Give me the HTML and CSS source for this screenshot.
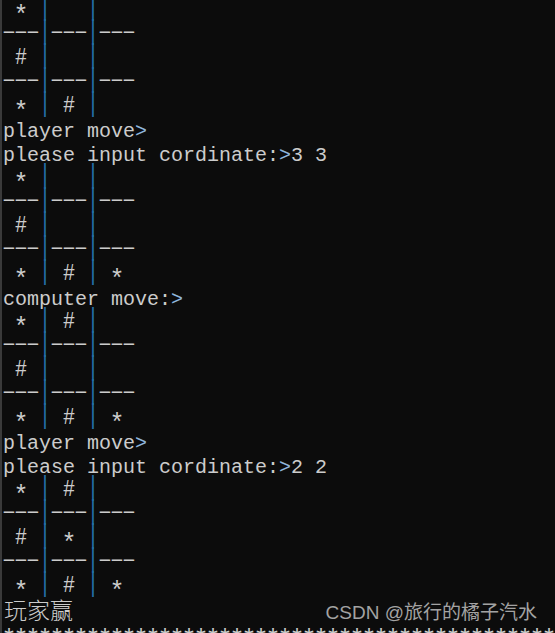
FILE: index.html
```html
<!DOCTYPE html>
<html lang="zh">
<head>
<meta charset="utf-8">
<title>console</title>
<link rel="stylesheet" href="styles.css">
</head>
<body>
<div class="window">
  <div class="console">
    <div class="ln"> <span class="s">*</span> <span class="p">|</span>   <span class="p">|</span></div>
    <div class="ln"><span class="d">-</span><span class="d">-</span><span class="d">-</span><span class="p">|</span><span class="d">-</span><span class="d">-</span><span class="d">-</span><span class="p">|</span><span class="d">-</span><span class="d">-</span><span class="d">-</span></div>
    <div class="ln"> <span class="h">#</span> <span class="p">|</span>   <span class="p">|</span></div>
    <div class="ln"><span class="d">-</span><span class="d">-</span><span class="d">-</span><span class="p">|</span><span class="d">-</span><span class="d">-</span><span class="d">-</span><span class="p">|</span><span class="d">-</span><span class="d">-</span><span class="d">-</span></div>
    <div class="ln"> <span class="s">*</span> <span class="p">|</span> <span class="h">#</span> <span class="p">|</span></div>
    <div class="ln">player move<span class="g">&gt;</span></div>
    <div class="ln">please input cordinate:<span class="g">&gt;</span>3 3</div>

    <div class="ln"> <span class="s">*</span> <span class="p">|</span>   <span class="p">|</span></div>
    <div class="ln"><span class="d">-</span><span class="d">-</span><span class="d">-</span><span class="p">|</span><span class="d">-</span><span class="d">-</span><span class="d">-</span><span class="p">|</span><span class="d">-</span><span class="d">-</span><span class="d">-</span></div>
    <div class="ln"> <span class="h">#</span> <span class="p">|</span>   <span class="p">|</span></div>
    <div class="ln"><span class="d">-</span><span class="d">-</span><span class="d">-</span><span class="p">|</span><span class="d">-</span><span class="d">-</span><span class="d">-</span><span class="p">|</span><span class="d">-</span><span class="d">-</span><span class="d">-</span></div>
    <div class="ln"> <span class="s">*</span> <span class="p">|</span> <span class="h">#</span> <span class="p">|</span> <span class="s">*</span></div>
    <div class="ln">computer move:<span class="g">&gt;</span></div>

    <div class="ln"> <span class="s">*</span> <span class="p">|</span> <span class="h">#</span> <span class="p">|</span></div>
    <div class="ln"><span class="d">-</span><span class="d">-</span><span class="d">-</span><span class="p">|</span><span class="d">-</span><span class="d">-</span><span class="d">-</span><span class="p">|</span><span class="d">-</span><span class="d">-</span><span class="d">-</span></div>
    <div class="ln"> <span class="h">#</span> <span class="p">|</span>   <span class="p">|</span></div>
    <div class="ln"><span class="d">-</span><span class="d">-</span><span class="d">-</span><span class="p">|</span><span class="d">-</span><span class="d">-</span><span class="d">-</span><span class="p">|</span><span class="d">-</span><span class="d">-</span><span class="d">-</span></div>
    <div class="ln"> <span class="s">*</span> <span class="p">|</span> <span class="h">#</span> <span class="p">|</span> <span class="s">*</span></div>
    <div class="ln">player move<span class="g">&gt;</span></div>
    <div class="ln">please input cordinate:<span class="g">&gt;</span>2 2</div>

    <div class="ln"> <span class="s">*</span> <span class="p">|</span> <span class="h">#</span> <span class="p">|</span></div>
    <div class="ln"><span class="d">-</span><span class="d">-</span><span class="d">-</span><span class="p">|</span><span class="d">-</span><span class="d">-</span><span class="d">-</span><span class="p">|</span><span class="d">-</span><span class="d">-</span><span class="d">-</span></div>
    <div class="ln"> <span class="h">#</span> <span class="p">|</span> <span class="s">*</span> <span class="p">|</span></div>
    <div class="ln"><span class="d">-</span><span class="d">-</span><span class="d">-</span><span class="p">|</span><span class="d">-</span><span class="d">-</span><span class="d">-</span><span class="p">|</span><span class="d">-</span><span class="d">-</span><span class="d">-</span></div>
    <div class="ln"> <span class="s">*</span> <span class="p">|</span> <span class="h">#</span> <span class="p">|</span> <span class="s">*</span></div>
    <div class="ln cjk">玩家赢</div>
    <div class="ln stars"><span class="s">*</span><span class="s">*</span><span class="s">*</span><span class="s">*</span><span class="s">*</span><span class="s">*</span><span class="s">*</span><span class="s">*</span><span class="s">*</span><span class="s">*</span><span class="s">*</span><span class="s">*</span><span class="s">*</span><span class="s">*</span><span class="s">*</span><span class="s">*</span><span class="s">*</span><span class="s">*</span><span class="s">*</span><span class="s">*</span><span class="s">*</span><span class="s">*</span><span class="s">*</span><span class="s">*</span><span class="s">*</span><span class="s">*</span><span class="s">*</span><span class="s">*</span><span class="s">*</span><span class="s">*</span><span class="s">*</span><span class="s">*</span><span class="s">*</span><span class="s">*</span><span class="s">*</span><span class="s">*</span><span class="s">*</span><span class="s">*</span><span class="s">*</span><span class="s">*</span><span class="s">*</span><span class="s">*</span><span class="s">*</span><span class="s">*</span><span class="s">*</span><span class="s">*</span></div>
  </div>
  <div class="watermark">CSDN @旅行的橘子汽水</div>
</div>
</body>
</html>
```

FILE: styles.css
```css
html, body {
  margin: 0;
  padding: 0;
  background: #0c0c0c;
}

.window {
  position: relative;
  width: 555px;
  height: 633px;
  overflow: hidden;
  background: #0c0c0c;
  border-left: 2px solid #3a3a3a;
  box-sizing: border-box;
}

.console {
  margin-top: 0;
  padding-left: 1px;
  font-family: "Liberation Mono", "DejaVu Sans Mono", monospace;
  font-size: 20px;
  color: #cccccc;
}

.ln {
  height: 24px;
  line-height: 24px;
  white-space: pre;
  overflow: visible;
}

.s {
  display: inline-block;
  width: 12px;
  height: 24px;
  text-align: center;
  transform: translateY(5px) scale(1.25);
}

.h {
  display: inline-block;
  width: 12px;
  height: 24px;
  text-align: center;
  transform: translateY(-2px) scaleY(1.15);
}

.p {
  display: inline-block;
  width: 12px;
  height: 24px;
  text-align: center;
  color: #2470aa;
  transform: translateY(-4px) scaleY(1.35);
}

.d {
  display: inline-block;
  width: 12px;
  height: 24px;
  text-align: center;
  transform: translateY(-3px) scaleX(1.9);
}

.g {
  color: #8fb6dc;
}

.cjk {
  font-family: "Noto Sans CJK SC", sans-serif;
  font-size: 23px;
  line-height: 18px;
  font-weight: 300;
  padding-left: 1px;
}

.watermark {
  position: absolute;
  top: 600px;
  right: 18px;
  font-family: "Liberation Sans", "Noto Sans CJK SC", sans-serif;
  font-size: 19px;
  line-height: 26px;
  color: #a3a3a3;
  white-space: nowrap;
}
```
